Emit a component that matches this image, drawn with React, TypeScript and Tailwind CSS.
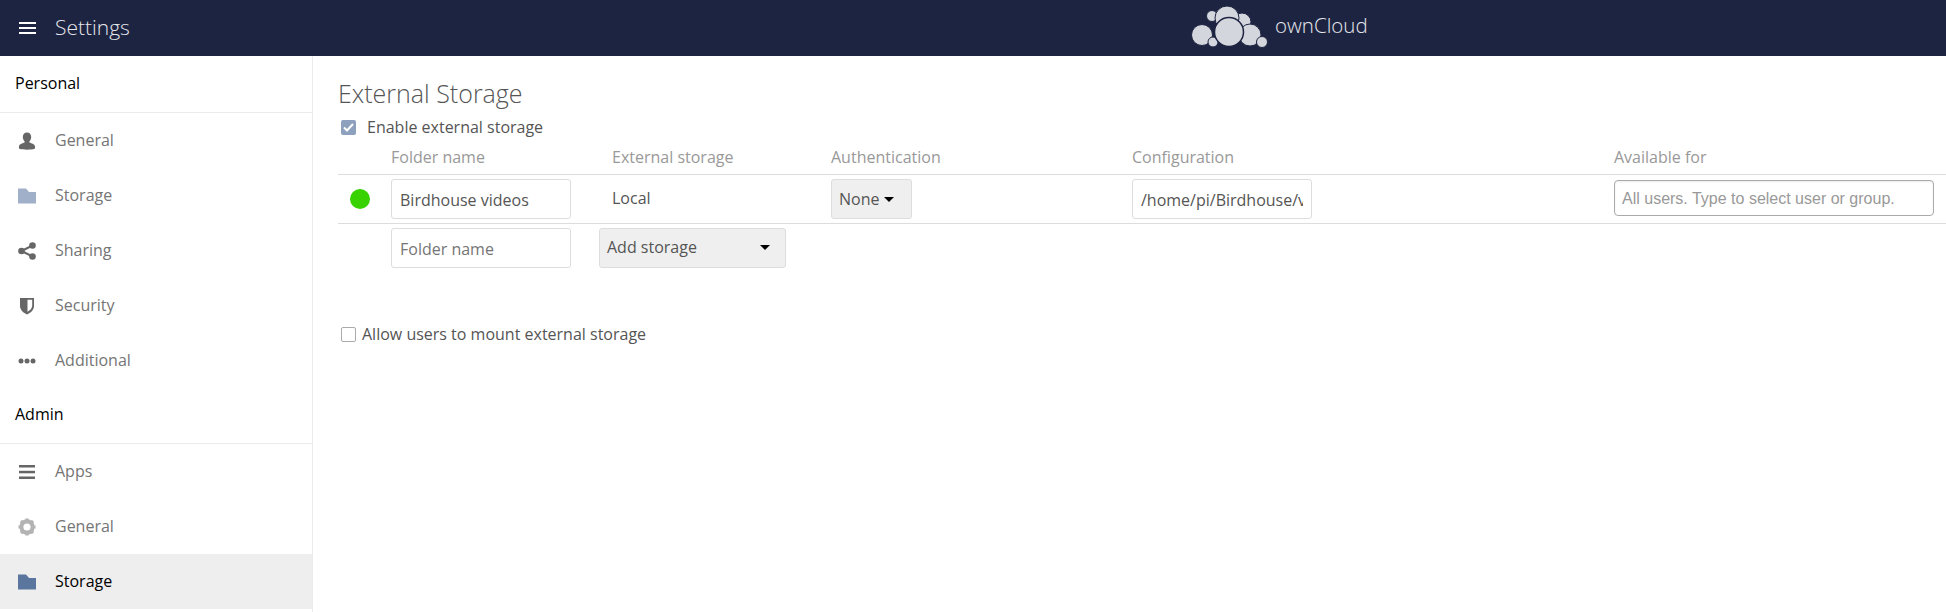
import React from 'react';

function Cloud() {
  return (
    <svg width="78" height="44" viewBox="0 0 78 44" className="block">
      <g fill="#d4d6dd" stroke="#1d2441" strokeWidth="1">
        <circle cx="22" cy="11" r="5.500" />
        <circle cx="52" cy="17" r="9" />
        <circle cx="37" cy="13" r="12" />
        <circle cx="12" cy="30" r="10.500" />
        <circle cx="23" cy="37" r="5" />
        <circle cx="60" cy="30" r="11" />
        <circle cx="72" cy="37" r="5.500" />
        <circle cx="39" cy="27" r="14.500" strokeWidth="1.500" />
      </g>
    </svg>
  );
}

function Caret() {
  return <span className="inline-block w-0 h-0 border-x-[5px] border-x-transparent border-t-[5px] border-t-black" />;
}

function PersonIcon() {
  return (
    <svg width="18" height="18" viewBox="0 0 18 18" fill="#666">
      <path d="M9 0.500c2.600 0 4.200 2 4.200 4.600 0 1.800-.8 3.400-1.800 4.300v1.200c1.800.8 5.200 1.500 5.600 3.600.2 1.300.1 2.200-.4 2.600-1.800.7-5 .9-7.600.9s-5.800-.2-7.600-.9c-.5-.4-.6-1.300-.4-2.600.4-2.100 3.800-2.800 5.600-3.600V9.400C5.600 8.500 4.800 6.900 4.800 5.100 4.800 2.500 6.400.5 9 .5z" />
    </svg>
  );
}

function FolderIcon({ color }: { color: string }) {
  return (
    <svg width="18" height="16" viewBox="0 0 18 16" fill={color}>
      <path d="M0 0.500h8l3 3.500h7v11.500H0z" />
    </svg>
  );
}

function ShareIcon() {
  return (
    <svg width="18" height="18" viewBox="0 0 18 18" fill="#666">
      <circle cx="14.500" cy="3.500" r="3.300" />
      <circle cx="3.500" cy="9" r="3.300" />
      <circle cx="14.500" cy="14.500" r="3.300" />
      <path d="M3.500 9l11-5.500M3.500 9l11 5.500" stroke="#666" strokeWidth="2" fill="none" />
    </svg>
  );
}

function ShieldIcon() {
  return (
    <svg width="16" height="18" viewBox="0 0 16 18">
      <path d="M1 1h14v8c0 4-3.500 7-7 8.500C4.500 16 1 13 1 9z" fill="#666" />
      <path d="M8.500 2.800h4.700v6c0 2.500-2.200 4.600-4.700 6z" fill="#fff" />
    </svg>
  );
}

function DotsIcon() {
  return (
    <svg width="18" height="6" viewBox="0 0 18 6" fill="#666">
      <circle cx="3" cy="3" r="2.500" />
      <circle cx="9" cy="3" r="2.500" />
      <circle cx="15" cy="3" r="2.500" />
    </svg>
  );
}

function BarsIcon() {
  return (
    <svg width="16" height="16" viewBox="0 0 16 16" fill="#666">
      <rect y="1" width="16" height="2.500" />
      <rect y="6.800" width="16" height="2.500" />
      <rect y="12.500" width="16" height="2.500" />
    </svg>
  );
}

function GearIcon() {
  return (
    <svg width="20" height="20" viewBox="0 0 20 20">
      <circle cx="10" cy="10" r="6.250" fill="none" stroke="#b3b3b3" strokeWidth="4.500" />
      <g stroke="#b3b3b3" strokeWidth="3.600">
        <path d="M10 0.500v3M10 16.500v3M0.500 10h3M16.500 10h3M3.300 3.300l2.100 2.100M14.600 14.600l2.100 2.100M3.300 16.700l2.100-2.100M14.600 5.400l2.100-2.100" />
      </g>
    </svg>
  );
}

function NavItem({ icon, label, active }: { icon: React.ReactNode; label: string; active?: boolean }) {
  return (
    <div className={active ? 'flex items-center h-[55px] bg-[#eeeeee] text-black' : 'flex items-center h-[55px] text-[#757575]'}>
      <span className="w-[55px] pl-[18px] pr-[19px] flex justify-center shrink-0">{icon}</span>
      <span className="text-[16px] -mt-[2px]">{label}</span>
    </div>
  );
}

function SectionTitle({ label }: { label: string }) {
  return <div className="h-[56px] pl-[15px] pb-[3px] flex items-center text-[16px] text-black border-b border-[#ebebeb]">{label}</div>;
}

function App() {
  return (
    <div className="w-[1946px] h-[612px] flex flex-col overflow-hidden bg-white font-['Open_Sans',sans-serif]">
      <header className="h-[56px] shrink-0 bg-[#1d2441] flex items-center relative">
        <div className="pl-[19px] flex items-center gap-[19px]">
          <svg width="17" height="14" viewBox="0 0 17 14" fill="#fff">
            <rect y="1" width="17" height="2" />
            <rect y="6" width="17" height="2" />
            <rect y="11" width="17" height="2" />
          </svg>
          <span className="text-[21px] font-light text-[#e6e7ec]">Settings</span>
        </div>
        <div className="absolute left-[1190px] top-[5px] flex items-center gap-[7px]">
          <Cloud />
          <span className="text-[20.500px] font-light text-[#e6e7ec] -mt-[3px]">ownCloud</span>
        </div>
      </header>
      <div className="flex flex-1 min-h-0">
        <aside className="w-[313px] shrink-0 border-r border-[#ebebeb] pt-px">
          <SectionTitle label="Personal" />
          <NavItem icon={<PersonIcon />} label="General" />
          <NavItem icon={<FolderIcon color="#a0b0c9" />} label="Storage" />
          <NavItem icon={<ShareIcon />} label="Sharing" />
          <NavItem icon={<ShieldIcon />} label="Security" />
          <NavItem icon={<DotsIcon />} label="Additional" />
          <SectionTitle label="Admin" />
          <NavItem icon={<BarsIcon />} label="Apps" />
          <NavItem icon={<GearIcon />} label="General" />
          <NavItem icon={<FolderIcon color="#5b769e" />} label="Storage" active />
        </aside>
        <main className="flex-1 pl-[25px] pt-[19px] text-[#555555] min-w-0">
          <h2 className="text-[25px] font-light leading-[36px] text-[#555555]">External Storage</h2>
          <label className="flex items-center h-[22px] mt-[5px] pl-[3px] text-[16px]">
            <span className="w-[15px] h-[15px] rounded-[2px] bg-[#8da0bd] flex items-center justify-center">
              <svg width="11" height="9" viewBox="0 0 11 9" fill="none" stroke="#fff" strokeWidth="2">
                <path d="M1 4.500l3 3 6-6.500" />
              </svg>
            </span>
            <span className="ml-[11px]">Enable external storage</span>
          </label>
          <div className="h-[37px] pt-px flex items-center border-b border-[#dddddd] text-[16px] text-[#999999]">
            <span className="w-[53px]" />
            <span className="w-[221px]">Folder name</span>
            <span className="w-[219px]">External storage</span>
            <span className="w-[301px]">Authentication</span>
            <span className="w-[482px]">Configuration</span>
            <span>Available for</span>
          </div>
          <div className="h-[49px] flex items-center border-b border-[#dddddd] text-[16px]">
            <span className="w-[53px] pl-[12px]">
              <span className="block w-[20px] h-[20px] rounded-full bg-[#37d200]" />
            </span>
            <input
              readOnly
              value="Birdhouse videos"
              className="w-[180px] h-[40px] px-[8px] pt-[2px] border border-[#dddddd] rounded-[3px] text-[#555555] outline-none"
            />
            <span className="w-[41px]" />
            <span className="w-[219px] -mt-[2px]">Local</span>
            <div className="w-[301px]">
              <button className="w-[81px] h-[40px] pl-[7px] flex items-center gap-[5px] bg-[#efefef] border border-[#dddddd] rounded-[3px] text-[#555555]">
                None <Caret />
              </button>
            </div>
            <input
              readOnly
              value="/home/pi/Birdhouse/videos"
              className="w-[180px] h-[40px] px-[8px] pt-[2px] border border-[#dddddd] rounded-[3px] text-[#555555] outline-none"
            />
            <span className="w-[302px]" />
            <input
              readOnly
              placeholder="All users. Type to select user or group."
              className="w-[320px] h-[36px] -mt-[2px] px-[7px] pt-[2px] border border-[#aaaaaa] rounded-[4px] font-['Liberation_Sans',sans-serif] text-[16px] placeholder:text-[#999999] outline-none shadow-[inset_0_1px_2px_rgba(0,0,0,0.08)]"
            />
          </div>
          <div className="flex items-center h-[48px] pl-[53px] text-[16px]">
            <input
              readOnly
              placeholder="Folder name"
              className="w-[180px] h-[40px] px-[8px] pt-[2px] border border-[#dddddd] rounded-[3px] placeholder:text-[#757575] outline-none"
            />
            <button className="ml-[28px] w-[187px] h-[40px] pl-[7px] pr-[15px] pb-[2px] flex items-center justify-between bg-[#efefef] border border-[#dddddd] rounded-[3px] text-[#555555]">
              Add storage <Caret />
            </button>
          </div>
          <label className="flex items-center h-[22px] mt-[51px] pl-[3px] text-[16px]">
            <span className="w-[15px] h-[15px] rounded-[2px] border border-[#aaaaaa] bg-white" />
            <span className="ml-[6px]">Allow users to mount external storage</span>
          </label>
        </main>
      </div>
    </div>
  );
}

export default App;
